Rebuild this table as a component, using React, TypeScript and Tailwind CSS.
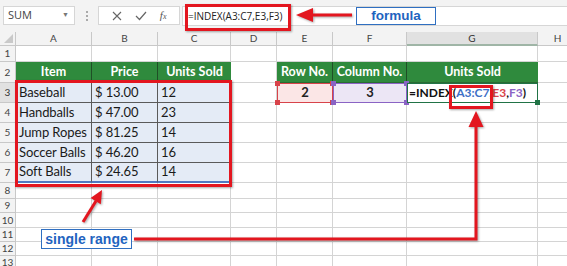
import React from 'react';

const RED = '#e3161f';

const headers = ['Item', 'Price', 'Units Sold'];
const items: [string, string, string][] = [
  ['Baseball', '$ 13.00', '12'],
  ['Handballs', '$ 47.00', '23'],
  ['Jump Ropes', '$ 81.25', '14'],
  ['Soccer Balls', '$ 46.20', '16'],
  ['Soft Balls', '$ 24.65', '14'],
];
const letters = ['A', 'B', 'C', 'D', 'E', 'F', 'G', 'H'];

function Toolbar() {
  return (
    <div className="flex h-[32px] items-start bg-[#f3f3f3] pt-[6px]">
      <div className="ml-[3px] flex h-[19px] w-[72px] items-center justify-between border border-[#d6d6d6] bg-white pl-[4px] pr-[5px] text-[11px] text-[#444]">
        <span>SUM</span>
        <span className="text-[7px] text-[#777]">▼</span>
      </div>
      <div className="flex h-[19px] w-[23px] flex-col items-center justify-center gap-[2px]">
        <span className="h-[2px] w-[2px] bg-[#aaa]" />
        <span className="h-[2px] w-[2px] bg-[#aaa]" />
        <span className="h-[2px] w-[2px] bg-[#aaa]" />
      </div>
      <div className="flex h-[19px] w-[82px] items-center justify-around border border-[#d6d6d6] bg-white px-[6px] text-[#666]">
        <svg width="10" height="10" viewBox="0 0 10 10">
          <path d="M1 1 L9 9 M9 1 L1 9" stroke="#666" strokeWidth="1.1" />
        </svg>
        <svg width="12" height="10" viewBox="0 0 12 10">
          <path d="M1 5 L4.5 8.5 L11 1" stroke="#666" strokeWidth="1.2" fill="none" />
        </svg>
        <span className="font-['Liberation_Serif',serif] text-[11px] italic text-[#555]">
          f<span className="text-[8px]">x</span>
        </span>
      </div>
      <div className="ml-[2px] flex h-[20px] flex-1 items-center border border-r-0 border-[#d6d6d6] bg-white pl-[5px] text-[10px] text-[#222]">
        =INDEX(A3:C7,E3,F3)
      </div>
    </div>
  );
}

function Corner() {
  return (
    <div className="relative border-b border-r border-[#c8c8c8] bg-[#f3f3f3]">
      <svg className="absolute bottom-[2px] right-[2px]" width="9" height="9" viewBox="0 0 9 9">
        <path d="M9 0 L9 9 L0 9 Z" fill="#c9c9c9" />
      </svg>
    </div>
  );
}

function ColHead({ l }: { l: string }) {
  const on = l === 'G';
  return (
    <div
      className={
        on
          ? 'flex items-center justify-center border-b-2 border-r border-b-[#9fb5a6] border-r-[#c8c8c8] bg-[#e1e1e1] text-[10px] text-[#333]'
          : 'flex items-center justify-center border-b border-r border-[#c8c8c8] bg-[#f3f3f3] text-[10px] text-[#444]'
      }
    >
      {l}
    </div>
  );
}

function RowHead({ n }: { n: number }) {
  return (
    <div
      className={
        n === 3
          ? 'flex items-center justify-center border-b border-r border-[#c8c8c8] bg-[#e1e1e1] text-[10px] text-[#333]'
          : 'flex items-center justify-center border-b border-r border-[#c8c8c8] bg-[#f3f3f3] text-[10px] text-[#444]'
      }
    >
      {n}
    </div>
  );
}

function Blank() {
  return <div className="border-b border-r border-[#d4d4d4] bg-white" />;
}

function Green({ children, last }: { children?: React.ReactNode; last?: boolean }) {
  return (
    <div
      className={
        last
          ? 'flex items-center justify-center whitespace-nowrap border-b border-b-[#2a6b33] bg-[#2f8a3d] pt-[1px] text-[12.5px] font-bold text-white'
          : 'flex items-center justify-center whitespace-nowrap border-b border-r border-b-[#2a6b33] border-r-[#1f4f26] bg-[#2f8a3d] pt-[1px] text-[12.5px] font-bold text-white'
      }
    >
      {children}
    </div>
  );
}

function Data({ children, last, bottom }: { children: React.ReactNode; last?: boolean; bottom?: boolean }) {
  return (
    <div
      className={
        (bottom ? 'border-b-2 border-b-[#4f79c2] ' : 'border-b border-b-[#5a5a5a] ') +
        (last ? 'border-r border-r-[#4f79c2] ' : 'border-r border-r-[#5a5a5a] ') +
        'flex items-center overflow-hidden whitespace-nowrap bg-[#e4ebf6] pl-[3px] text-[13px] tracking-[-0.1px] text-[#1a1a1a]'
      }
    >
      {children}
    </div>
  );
}

function Handle({ color, pos }: { color: string; pos: string }) {
  return <span className={`absolute h-[5px] w-[5px] ${pos}`} style={{ background: color }} />;
}

function RefCell({ value, tone }: { value: string; tone: 'red' | 'purple' }) {
  const c = tone === 'red' ? '#d8434a' : '#8a63c4';
  return (
    <div
      className={
        tone === 'red'
          ? 'relative flex items-center justify-center border border-[#d8434a] bg-[#fbe6e6] text-[13px] font-bold text-[#222]'
          : 'relative flex items-center justify-center border border-[#8a63c4] bg-[#ece6f5] text-[13px] font-bold text-[#222]'
      }
    >
      {value}
      <Handle color={c} pos="-left-[3px] -top-[3px]" />
      <Handle color={c} pos="-right-[3px] -top-[3px]" />
      <Handle color={c} pos="-left-[3px] -bottom-[3px]" />
      <Handle color={c} pos="-right-[3px] -bottom-[3px]" />
    </div>
  );
}

function FormulaCell() {
  return (
    <div className="relative flex items-center whitespace-nowrap border border-[#217346] bg-white pl-[1px] text-[12px] font-bold text-[#111]">
      <span>=INDEX(</span>
      <span className="text-[#3d6fc6]">A3:C7</span>
      <span>,</span>
      <span className="text-[#d8434a]">E3</span>
      <span>,</span>
      <span className="text-[#8a63c4]">F3</span>
      <span>)</span>
      <span className="absolute -bottom-[3px] -right-[3px] h-[5px] w-[5px] bg-[#217346]" />
    </div>
  );
}

function Sheet() {
  const cells: React.ReactNode[] = [];
  cells.push(<Corner key="corner" />);
  letters.forEach((l) => cells.push(<ColHead key={'h' + l} l={l} />));

  for (let r = 1; r <= 13; r++) {
    cells.push(<RowHead key={'r' + r} n={r} />);
    for (let c = 0; c < 8; c++) {
      const k = `${r}-${c}`;
      if (r === 2 && c < 3) cells.push(<Green key={k} last={c === 2}>{headers[c]}</Green>);
      else if (r === 2 && c === 4) cells.push(<Green key={k}>Row No.</Green>);
      else if (r === 2 && c === 5) cells.push(<Green key={k}>Column No.</Green>);
      else if (r === 2 && c === 6) cells.push(<Green key={k} last>Units Sold</Green>);
      else if (r >= 3 && r <= 7 && c < 3)
        cells.push(
          <Data key={k} last={c === 2} bottom={r === 7}>
            {items[r - 3][c]}
          </Data>
        );
      else if (r === 3 && c === 4) cells.push(<RefCell key={k} value="2" tone="red" />);
      else if (r === 3 && c === 5) cells.push(<RefCell key={k} value="3" tone="purple" />);
      else if (r === 3 && c === 6) cells.push(<FormulaCell key={k} />);
      else cells.push(<Blank key={k} />);
    }
  }

  return (
    <div className="grid grid-cols-[16px_76px_66px_73px_46px_56px_74px_131px_40px] grid-rows-[14px_16px_21px_20px_20px_20px_20px_20px_16px_14px_15px_14px_14px_14px] font-['Lato',sans-serif]">
      {cells}
    </div>
  );
}

function Callouts() {
  return (
    <>
      {/* red frames */}
      <div className="absolute left-[185px] top-[4px] h-[27px] w-[106px] border-[3px] border-[#e3161f] shadow-[1px_1px_2px_rgba(0,0,0,0.35)]" />
      <div className="absolute left-[15px] top-[80px] h-[107px] w-[217px] border-[3px] border-[#e3161f] shadow-[1px_1px_2px_rgba(0,0,0,0.35)]" />
      <div className="absolute left-[449px] top-[85px] h-[24px] w-[44px] border-[3px] border-[#e3161f] shadow-[1px_1px_2px_rgba(0,0,0,0.35)]" />

      {/* arrows */}
      <svg className="absolute left-0 top-0" width="567" height="266" viewBox="0 0 567 266">
        <g style={{ filter: 'drop-shadow(1px 1px 1px rgba(0,0,0,0.35))' }}>
          <path d="M352 15 L308 15" stroke={RED} strokeWidth="3" />
          <path d="M296 15 L313 8 L313 22 Z" fill={RED} />
          <path d="M83 222 L96 201" stroke={RED} strokeWidth="3" />
          <path d="M102 190 L100.8 204.3 L90.6 198.1 Z" fill={RED} />
          <path d="M134 239 L476 239 L476 124" stroke={RED} strokeWidth="3" fill="none" />
          <path d="M476 111 L468.5 127 L483.5 127 Z" fill={RED} />
        </g>
      </svg>

      {/* labels */}
      <div className="absolute left-[356px] top-[7px] flex h-[18px] w-[80px] items-center justify-center border-[1.5px] border-[#2f6fc1] bg-white font-['Liberation_Sans',sans-serif] text-[13.5px] font-bold text-[#1f64c0]">
        formula
      </div>
      <div className="absolute left-[41px] top-[229px] flex h-[20px] w-[91px] items-center justify-center border-[1.5px] border-[#2f6fc1] bg-white font-['Liberation_Sans',sans-serif] text-[14px] font-bold text-[#1f64c0]">
        single range
      </div>
    </>
  );
}

export default function App() {
  return (
    <div className="relative h-[266px] w-[567px] overflow-hidden bg-white font-['Open_Sans',sans-serif]">
      <Toolbar />
      <Sheet />
      <Callouts />
    </div>
  );
}
